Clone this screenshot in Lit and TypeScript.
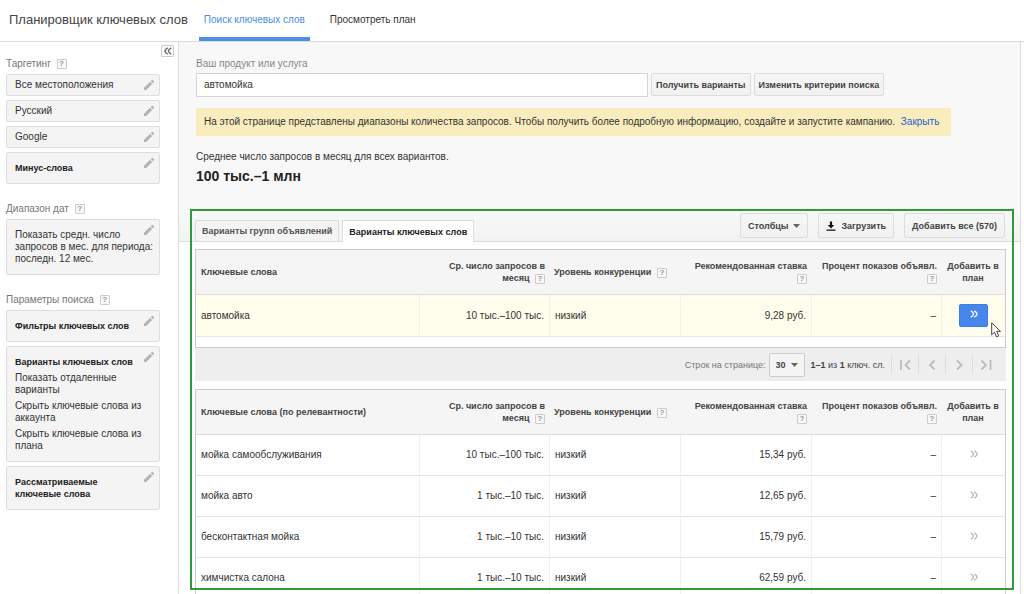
import { LitElement, html, css, svg, nothing } from "lit";
import { customElement, property } from "lit/decorators.js";

const chevrons = html`<svg width="8" height="8" viewBox="0 0 8 8" fill="none" stroke="currentColor" stroke-width="1.5" aria-hidden="true"><path d="M.8.8C2.4 1.6 3.4 2.800 3.600 4C3.400 5.200 2.400 6.400.8 7.200M4.300.8C5.900 1.600 6.900 2.800 7.100 4C6.900 5.200 5.900 6.400 4.300 7.200"/></svg>`;
const pencil = html`<svg width="12" height="12" viewBox="0 0 12 12" fill="#b4b4b4" aria-hidden="true"><path d="M1 8.800 7 2.800 9.200 5 3.200 11H1ZM7.700 2.100 8.900.9Q9.300.5 9.700.9L11.100 2.300Q11.500 2.700 11.100 3.100L9.900 4.300Z"/></svg>`;
const pagerPaths = [
  svg`<path d="M2 1v10M11 1.500 6.500 6 11 10.500"/>`,
  svg`<path d="M8.500 1.500 4 6l4.500 4.500"/>`,
  svg`<path d="M4 1.500 8.500 6 4 10.500"/>`,
  svg`<path d="M1.500 1.500 6 6l-4.500 4.500M10.500 1v10"/>`,
];
const pagerLabels = ["Первая страница", "Предыдущая страница", "Следующая страница", "Последняя страница"];

interface Keyword { word: string; volume: string; level: string; bid: string; active?: boolean }

@customElement("help-mark")
class HelpMark extends LitElement {
  static styles = css`
    :host { display: inline-block; vertical-align: middle; }
    button { display: block; width: 10px; height: 10px; padding: 0; border: 1px solid #ccc; border-radius: 1px;
      background: #f8f8f8; color: #999; font: bold 8px/8px "Liberation Sans", Arial, sans-serif; }
  `;
  render() { return html`<button type="button" aria-label="Справка">?</button>`; }
}

@customElement("setting-card")
class SettingCard extends LitElement {
  @property() size = "large";
  static styles = css`
    :host { display: block; }
    .card { position: relative; padding: 9px 4px 9px 8px; border: 1px solid #dedede; border-radius: 2px; background: #f4f4f4; }
    .small { padding: 4px 8px; }
    .edit { position: absolute; top: 4px; right: 4px; width: 12px; height: 12px; padding: 0; border: 0; background: none; }
    .edit svg { display: block; }
  `;
  render() {
    return html`<div class="card ${this.size}"><slot></slot><button class="edit" type="button" aria-label="Изменить">${pencil}</button></div>`;
  }
}

@customElement("keyword-table")
class KeywordTable extends LitElement {
  @property() heading = "";
  @property({ attribute: false }) rows: Keyword[] = [];
  static styles = css`
    :host { display: block; border: 1px solid #ccc; background: #fff; }
    table { width: 100%; table-layout: fixed; border-collapse: separate; border-spacing: 0; font-size: 10px; line-height: 12px; }
    .medium { width: 130px; }
    .wide { width: 131px; }
    .narrow { width: 64px; }
    th, td { box-sizing: border-box; padding: 0 5px; text-align: left; vertical-align: middle; }
    th { height: 45px; background: #f5f5f5; border-bottom: 1px solid #ddd; font-size: 9px; font-weight: bold; color: #444; padding-right: 4px; }
    td { height: 41px; border-bottom: 1px solid #e6e6e6; border-left: 1px solid #f0f0f0; }
    td:first-child { border-left: 0; }
    .num { text-align: right; }
    .add { padding: 0; text-align: center; }
    help-mark { margin-left: 3px; }
    .active td { height: 42px; background: #fffeec; }
    .plus { display: inline-grid; place-items: center; width: 29px; height: 23px; padding: 0 0 3px; border: 0; background: none; color: #bbb; vertical-align: middle; }
    .active .plus { border: 1px solid #3d7de0; border-radius: 2px; background: #4787ed; color: #fff; }
    .spot { position: relative; display: inline-block; }
    .cursor { position: absolute; left: 32px; top: 18px; }
  `;
  render() {
    return html`<table>
      <colgroup><col><col class="medium"><col class="wide"><col class="wide"><col class="medium"><col class="narrow"></colgroup>
      <thead><tr>
        <th scope="col">${this.heading}</th>
        <th scope="col" class="num">Ср. число запросов в<br>месяц <help-mark></help-mark></th>
        <th scope="col">Уровень конкуренции <help-mark></help-mark></th>
        <th scope="col" class="num">Рекомендованная ставка<br><help-mark></help-mark></th>
        <th scope="col" class="num">Процент показов объявл.<br><help-mark></help-mark></th>
        <th scope="col" class="add">Добавить в<br>план</th>
      </tr></thead>
      <tbody>${this.rows.map(r => html`<tr class=${r.active ? "active" : ""}>
        <td>${r.word}</td><td class="num">${r.volume}</td><td>${r.level}</td><td class="num">${r.bid}</td><td class="num">–</td>
        <td class="add"><span class="spot"><button class="plus" type="button" aria-label="Добавить в план">${chevrons}</button>${r.active
          ? html`<svg class="cursor" width="11" height="16" viewBox="0 0 11 16" aria-hidden="true"><path d="M.7.8V12.800L3.500 10.200 5.500 14.900 7.700 13.900 5.700 9.400H9.500Z" fill="#fff" stroke="#444"/></svg>` : nothing}</span></td>
      </tr>`)}</tbody>
    </table>`;
  }
}

@customElement("app-root")
class AppRoot extends LitElement {
  static styles = css`
    :host { display: flex; flex-direction: column; height: 100vh; overflow: hidden; background: #fff; color: #333;
      font: 10px/12px "Liberation Sans", Arial, sans-serif; }
    button, input, select { font: inherit; color: inherit; margin: 0; }
    a { text-decoration: none; }
    svg { display: block; }
    .top { flex: none; display: flex; align-items: stretch; gap: 11px; height: 41px; padding-left: 9px; border-bottom: 1px solid #ddd; }
    h1 { margin: 0; font-size: 13px; line-height: 40px; font-weight: normal; color: #444; }
    nav { display: flex; gap: 15px; }
    nav a { padding: 0 5px; line-height: 40px; color: #333; }
    nav .current { box-sizing: border-box; height: 41px; border-bottom: 4px solid #4a8ee6; color: #4a8ee6; }
    .body { flex: 1; min-height: 0; display: flex; }
    aside { flex: none; box-sizing: border-box; width: 179px; padding: 3px 18px 0 6px; border-right: 1px solid #ddd; display: flex; flex-direction: column; }
    .collapse { align-self: flex-end; display: grid; place-items: center; width: 13px; height: 12px; padding: 0; margin: 0 -14px 1px 0; border: 1px solid #ccc; border-radius: 1px; background: #fafafa; color: #666; }
    .collapse svg { transform: scaleX(-1); }
    .group { display: flex; flex-direction: column; gap: 4px; margin-bottom: 19px; }
    h2 { margin: 0; font-size: 10px; font-weight: normal; color: #777; }
    h2 help-mark { margin-left: 3px; }
    .name { display: block; font-size: 9px; font-weight: bold; color: #222; }
    setting-card p { margin: 4px 0 0; }
    main { flex: 1; min-width: 0; box-sizing: border-box; margin-right: 3px; border-right: 1px solid #ddd; background: #f8f8f8; }
    .intro { padding: 16px 17px 0; }
    .intro label { display: block; color: #888; }
    .search { display: flex; align-items: flex-start; gap: 3px; margin-top: 3px; }
    .search input { flex: 0 1 452px; box-sizing: border-box; min-width: 0; height: 24px; padding: 0 7px 2px; border: 1px solid #d4d4d4; background: #fff; }
    .btn { display: flex; align-items: center; gap: 5px; box-sizing: border-box; height: 23px; padding: 0 4px; border: 1px solid #dcdcdc; border-radius: 2px; background: linear-gradient(#f6f6f6, #f1f1f1); font-size: 9px; font-weight: bold; color: #444; white-space: nowrap; }
    .notice { width: fit-content; margin: 11px 0 15px; padding: 8px 12px 8px 8px; background: #f9edbe; }
    .notice a { margin-left: 3px; color: #2a5fc9; }
    .total { margin: 5px 0 29px; font-size: 14px; line-height: 16px; font-weight: bold; color: #222; }
    p { margin: 0; }
    .results { position: relative; }
    .bar { display: flex; justify-content: space-between; align-items: flex-start; height: 28px; padding: 0 15px 0 16px; border-bottom: 1px solid #ddd; background: linear-gradient(#f8f8f8, #f2f2f2); }
    .tabs { display: flex; gap: 3px; padding-top: 7px; }
    .tab { box-sizing: border-box; height: 21px; padding: 0 6px; border: 1px solid #dcdcdc; border-bottom: 0; background: #f4f4f4; font-size: 9px; font-weight: bold; color: #555; white-space: nowrap; }
    .tab.on { height: 22px; background: #fff; color: #222; }
    .actions { display: flex; gap: 10px; }
    .actions .btn { height: 25px; padding: 0 7px; }
    .lists { padding: 7px 14px 0 16px; background: #fff; }
    .single { padding-bottom: 10px; }
    .pager { display: flex; justify-content: flex-end; align-items: center; height: 33px; margin-bottom: 8px; padding-right: 7px; background: #eee; font-size: 9px; color: #777; }
    .size { display: grid; align-items: center; margin: 0 6px 0 3px; }
    .size select, .size svg { grid-area: 1 / 1; }
    .size svg { justify-self: end; margin-right: 7px; pointer-events: none; }
    select { appearance: none; box-sizing: border-box; width: 36px; height: 24px; padding: 0 6px; border: 1px solid #ccc; border-radius: 2px; background: #f4f4f4; font-weight: bold; color: #444; }
    .count { margin-right: 6px; color: #444; }
    .step { display: grid; place-items: center; width: 27px; height: 19px; padding: 0; border: 0; border-left: 1px solid #ddd; background: none; color: #bbb; }
    .frame { position: absolute; left: 11px; right: 6px; top: -4px; height: 377px; border: 2px solid #2f9a37; pointer-events: none; }
  `;

  private chosen: Keyword[] = [{ word: "автомойка", volume: "10 тыс.–100 тыс.", level: "низкий", bid: "9,28 руб.", active: true }];
  private ideas: Keyword[] = [
    { word: "мойка самообслуживания", volume: "10 тыс.–100 тыс.", level: "низкий", bid: "15,34 руб." },
    { word: "мойка авто", volume: "1 тыс.–10 тыс.", level: "низкий", bid: "12,65 руб." },
    { word: "бесконтактная мойка", volume: "1 тыс.–10 тыс.", level: "низкий", bid: "15,79 руб." },
    { word: "химчистка салона", volume: "1 тыс.–10 тыс.", level: "низкий", bid: "62,59 руб." },
  ];

  render() {
    const arrow = html`<svg width="7" height="4" viewBox="0 0 7 4" aria-hidden="true"><path d="M0 0h7L3.500 4Z" fill="#666"/></svg>`;
    return html`
      <header class="top">
        <h1>Планировщик ключевых слов</h1>
        <nav><a class="current" href="#search">Поиск ключевых слов</a><a href="#plan">Просмотреть план</a></nav>
      </header>
      <div class="body">
        <aside>
          <button class="collapse" type="button" aria-label="Свернуть">${chevrons}</button>
          <section class="group">
            <h2>Таргетинг <help-mark></help-mark></h2>
            <setting-card size="small">Все местоположения</setting-card>
            <setting-card size="small">Русский</setting-card>
            <setting-card size="small">Google</setting-card>
            <setting-card><span class="name">Минус-слова</span></setting-card>
          </section>
          <section class="group">
            <h2>Диапазон дат <help-mark></help-mark></h2>
            <setting-card>Показать средн. число<br>запросов в мес. для периода:<br>последн. 12 мес.</setting-card>
          </section>
          <section class="group">
            <h2>Параметры поиска <help-mark></help-mark></h2>
            <setting-card><span class="name">Фильтры ключевых слов</span></setting-card>
            <setting-card><span class="name">Варианты ключевых слов</span>
              <p>Показать отдаленные<br>варианты</p><p>Скрыть ключевые слова из<br>аккаунта</p><p>Скрыть ключевые слова из<br>плана</p></setting-card>
            <setting-card><span class="name">Рассматриваемые<br>ключевые слова</span></setting-card>
          </section>
        </aside>
        <main>
          <div class="intro">
            <label for="product">Ваш продукт или услуга</label>
            <div class="search">
              <input id="product" type="text" .value=${"автомойка"}>
              <button class="btn" type="button">Получить варианты</button>
              <button class="btn" type="button">Изменить критерии поиска</button>
            </div>
            <p class="notice">На этой странице представлены диапазоны количества запросов. Чтобы получить более подробную информацию, создайте и запустите кампанию. <a href="#close">Закрыть</a></p>
            <p>Среднее число запросов в месяц для всех вариантов.</p>
            <p class="total">100 тыс.–1 млн</p>
          </div>
          <section class="results">
            <div class="bar">
              <div class="tabs" role="tablist">
                <button class="tab" type="button" role="tab" aria-selected="false">Варианты групп объявлений</button>
                <button class="tab on" type="button" role="tab" aria-selected="true">Варианты ключевых слов</button>
              </div>
              <div class="actions">
                <button class="btn" type="button">Столбцы ${arrow}</button>
                <button class="btn" type="button"><svg width="10" height="10" viewBox="0 0 10 10" fill="#111" aria-hidden="true"><path d="M3.900.5h2.200V4h2.200L5 7.400 1.700 4h2.200ZM.5 8.600h9v1.200h-9Z"/></svg>Загрузить</button>
                <button class="btn" type="button">Добавить все (570)</button>
              </div>
            </div>
            <div class="lists">
              <keyword-table class="single" heading="Ключевые слова" .rows=${this.chosen}></keyword-table>
              <div class="pager">
                <label for="size">Строк на странице:</label>
                <span class="size"><select id="size"><option>30</option></select>${arrow}</span>
                <span class="count"><b>1–1</b> из <b>1</b> ключ. сл.</span>
                ${pagerPaths.map((p, i) => html`<button class="step" type="button" aria-label=${pagerLabels[i]}><svg width="12" height="12" viewBox="0 0 12 12" fill="none" stroke="currentColor" stroke-width="1.800">${p}</svg></button>`)}
              </div>
              <keyword-table heading="Ключевые слова (по релевантности)" .rows=${this.ideas}></keyword-table>
            </div>
            <div class="frame"></div>
          </section>
        </main>
      </div>`;
  }
}
